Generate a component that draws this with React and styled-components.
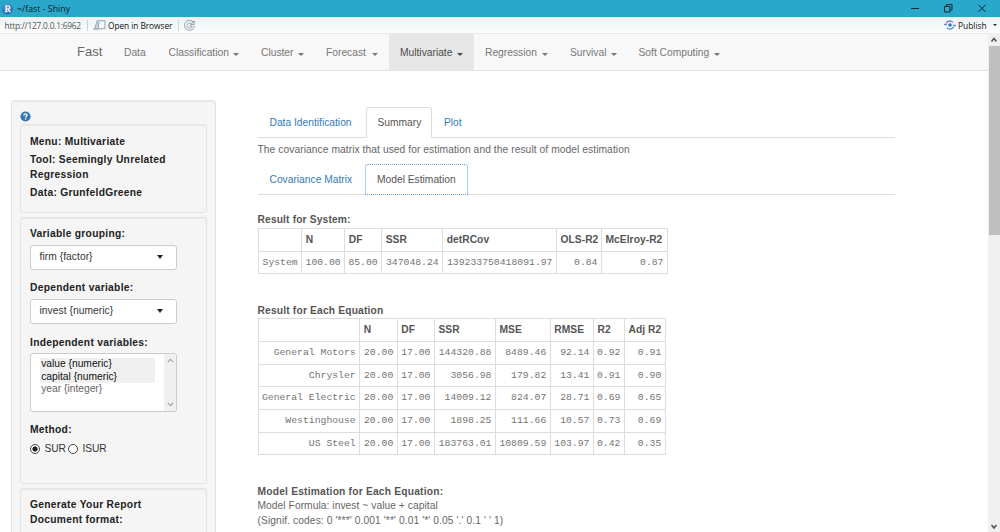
import React from 'react';
import styled, { createGlobalStyle } from 'styled-components';

const Global = createGlobalStyle`
  * { box-sizing: border-box; }
  body {
    margin: 0;
    background: #fff;
    overflow: hidden;
    font: 10.25px/14.6px "Liberation Sans", Arial, sans-serif;
    color: #666;
  }
`;

const Window = styled.div`
  width: 1000px;
  height: 532px;
  display: flex;
  flex-direction: column;
  overflow: hidden;
`;

const TitleBar = styled.header`
  height: 17px;
  flex: none;
  display: flex;
  align-items: center;
  padding: 0 14px 1px 2px;
  background: #2aa8cc;
  color: #0c1c22;
  font: 8.8px/16px "Open Sans", "Noto Sans", sans-serif;
`;

const AppTitle = styled.span`
  flex: 1;
  margin-left: 4px;
  padding-top: 1px;
`;

const WindowButtons = styled.div`
  display: flex;
  align-items: center;
  gap: 25px;
  svg { display: block; }
`;

const ViewerBar = styled.div`
  height: 16px;
  flex: none;
  display: flex;
  align-items: center;
  padding: 0 3px 0 4.5px;
  background: linear-gradient(#eef2f4, #fcfdfd);
  font: 8.4px/15px "Open Sans", "Noto Sans", sans-serif;
  color: #111;
  svg { display: block; flex: none; }
`;

const Address = styled.span`
  width: 82px;
  color: #555;
  letter-spacing: -0.23px;
  white-space: nowrap;
`;

const Rule = styled.i`
  width: 1px;
  height: 11px;
  background: #cfd3d6;
  margin-right: ${(p) => p.$gap}px;
`;

const OpenLabel = styled.span`
  width: 70px;
  margin-left: 2.5px;
  white-space: nowrap;
  font-weight: 500;
  letter-spacing: -0.08px;
`;

const PublishLabel = styled.span`
  width: 35px;
  margin: 0 0 0 2px;
  font-weight: 500;
`;

const Spacer = styled.span`
  flex: 1;
`;

const Viewport = styled.div`
  flex: 1;
  min-height: 0;
  display: flex;
`;

const Page = styled.div`
  flex: 1;
  min-width: 0;
  overflow: hidden;
`;

const Scrollbar = styled.div`
  width: 12px;
  display: flex;
  flex-direction: column;
  align-items: center;
  background: #f0f0f0;
  svg { display: block; flex: none; }
`;

const Thumb = styled.div`
  width: 11px;
  height: 189px;
  margin-bottom: auto;
  background: #bfbfbf;
`;

const Navbar = styled.nav`
  height: 38px;
  display: flex;
  background: #f8f8f8;
  border-top: 1px solid #e7e7e7;
  border-bottom: 1px solid #e3e3e3;
  padding-left: 77px;
`;

const Brand = styled.span`
  width: 36px;
  font-size: 13px;
  line-height: 36px;
  color: #686868;
`;

const NavItem = styled.a`
  width: ${(p) => p.$w}px;
  display: flex;
  justify-content: space-between;
  align-items: center;
  padding: 2px 11px 0;
  white-space: nowrap;
  background: ${(p) => (p.$active ? '#e7e7e7' : 'transparent')};
  color: ${(p) => (p.$active ? '#4c4c4c' : '#777')};
`;

const Caret = styled.i`
  border: solid transparent;
  border-width: 3px 3px 0;
  border-top-color: currentColor;
  margin-top: 2px;
`;

const Columns = styled.div`
  display: flex;
  align-items: flex-start;
  padding: 29px 0 0 11px;
`;

const Sidebar = styled.aside`
  width: 205px;
  height: 480px;
  padding: 10px 8.5px 10px 8px;
  background: #f5f5f5;
  border: 1px solid #e3e3e3;
  border-radius: 3px;
  box-shadow: inset 0 1px 1px rgba(0, 0, 0, 0.05);
  color: #222;
`;

const HelpIcon = styled.svg`
  display: block;
  margin: 0 0 2.3px 0;
`;

const Well = styled.section`
  height: ${(p) => p.$h}px;
  margin-bottom: 3.5px;
  padding: 9.5px 9px 0;
  border: 1px solid #e3e3e3;
  border-radius: 3px;
  box-shadow: inset 0 1px 1px rgba(0, 0, 0, 0.05);
`;

const Label = styled.div`
  margin-bottom: ${(p) => (p.$mb === undefined ? 3.7 : p.$mb)}px;
  font-weight: 700;
  letter-spacing: 0.29px;
`;

const Select = styled.div`
  width: 147px;
  height: 25px;
  margin-bottom: 11.8px;
  display: flex;
  align-items: center;
  justify-content: space-between;
  padding: 0 13px 0 8.5px;
  background: #fff;
  border: 1px solid #ccc;
  border-radius: 3px;
  color: #333;
  letter-spacing: 0.05px;
`;

const SelectCaret = styled.i`
  border: solid transparent;
  border-width: ${(p) => (p.$small ? '2.5px 2px 0' : '4px 3.5px 0')};
  border-top-color: #222;
`;

const ListBox = styled.div`
  width: 147px;
  height: 59px;
  margin-bottom: 11px;
  display: flex;
  justify-content: space-between;
  background: #fff;
  border: 1px solid #ccc;
  border-radius: 3px;
  overflow: hidden;
`;

const Options = styled.div`
  width: 115px;
  margin: 4px 0 0 9px;
`;

const Option = styled.div`
  padding-left: 1.2px;
  line-height: 12.6px;
  background: ${(p) => (p.$on ? '#f0f0f0' : 'transparent')};
  color: ${(p) => (p.$on ? '#111' : '#666')};
`;

const ListScroll = styled.div`
  width: 12px;
  display: flex;
  flex-direction: column;
  justify-content: space-between;
  align-items: center;
  padding: 4px 0;
  background: #f0f0f0;
`;

const Radios = styled.div`
  display: flex;
  align-items: center;
  padding-top: 0.5px;
  color: #333;
`;

const Radio = styled.i`
  width: 10px;
  height: 10px;
  margin-right: 4.5px;
  border: 1px solid #444;
  border-radius: 50%;
  background: ${(p) => (p.$on ? 'radial-gradient(circle, #222 0 2.2px, #fff 3px)' : '#fff')};
`;

const RadioText = styled.span`
  width: ${(p) => p.$w}px;
  letter-spacing: -0.15px;
`;

const Main = styled.main`
  width: 637px;
  margin-left: 41.5px;
  padding-top: 7px;
`;

const Tabs = styled.div`
  height: 31px;
  display: flex;
  border-bottom: 1px solid #ddd;
`;

const Tab = styled.a`
  width: ${(p) => p.$w}px;
  height: 31px;
  padding-left: 11px;
  line-height: 30px;
  white-space: nowrap;
  color: ${(p) => (p.$active ? '#555' : '#337ab7')};
  border: 1px solid transparent;
  ${(p) => p.$active && 'background: #fff; border-color: #ddd #ddd #fff; border-radius: 3px 3px 0 0;'}
  ${(p) => p.$focused && 'border: 1px dotted #5b9fdc;'}
`;

const Paragraph = styled.p`
  margin: ${(p) => p.$m};
  letter-spacing: ${(p) => p.$ls || 0}px;
  white-space: nowrap;
`;

const Heading = styled.h4`
  margin: ${(p) => p.$m};
  font-size: 10.25px;
  font-weight: 700;
  letter-spacing: ${(p) => p.$ls}px;
  color: #555;
`;

const Table = styled.table`
  width: ${(p) => p.$w}px;
  table-layout: fixed;
  border-collapse: collapse;
`;

const Th = styled.th`
  height: 22.7px;
  padding: 0 0 0 3.5px;
  border: 1px solid #ddd;
  text-align: left;
  white-space: nowrap;
  letter-spacing: 0.05px;
  color: #555;
`;

const Td = styled.td`
  height: 22.7px;
  padding: 0 3.5px 0 0;
  border: 1px solid #ddd;
  text-align: right;
  white-space: nowrap;
  font: 9.78px/14px "Liberation Mono", "Courier New", monospace;
  color: #747474;
`;

const NAV = [
  ['Data', 44.5], ['Classification', 92.5], ['Cluster', 65], ['Forecast', 74],
  ['Multivariate', 85], ['Regression', 85], ['Survival', 68.5], ['Soft Computing', 103],
];

const SYSTEM = {
  cols: [43.7, 43, 37, 61, 113.8, 45, 66],
  head: ['', 'N', 'DF', 'SSR', 'detRCov', 'OLS-R2', 'McElroy-R2'],
  rows: [['System', '100.00', '85.00', '347048.24', '139233750418091.97', '0.84', '0.87']],
};

const EQUATIONS = {
  cols: [101.7, 37.6, 37.2, 61, 54.8, 43.2, 31, 40.8],
  head: ['', 'N', 'DF', 'SSR', 'MSE', 'RMSE', 'R2', 'Adj R2'],
  rows: [
    ['General Motors', '20.00', '17.00', '144320.88', '8489.46', '92.14', '0.92', '0.91'],
    ['Chrysler', '20.00', '17.00', '3056.98', '179.82', '13.41', '0.91', '0.90'],
    ['General Electric', '20.00', '17.00', '14009.12', '824.07', '28.71', '0.69', '0.65'],
    ['Westinghouse', '20.00', '17.00', '1898.25', '111.66', '10.57', '0.73', '0.69'],
    ['US Steel', '20.00', '17.00', '183763.01', '10809.59', '103.97', '0.42', '0.35'],
  ],
};

function Grid({ data }) {
  return (
    <Table $w={data.cols.reduce((a, b) => a + b, 0)}>
      <colgroup>{data.cols.map((w, i) => <col key={i} style={{ width: w }} />)}</colgroup>
      <thead><tr>{data.head.map((h, i) => <Th key={i}>{h}</Th>)}</tr></thead>
      <tbody>
        {data.rows.map((r) => (
          <tr key={r[0]}>{r.map((c, i) => <Td key={i}>{c}</Td>)}</tr>
        ))}
      </tbody>
    </Table>
  );
}

function Chevron({ down }) {
  return (
    <svg width="7" height="5" viewBox="0 0 7 5" fill="none" stroke="#a0a0a0" strokeWidth="1.1">
      <path d={down ? 'M.8 .8 3.5 3.6 6.2 .8' : 'M.8 4.2 3.5 1.4 6.2 4.2'} />
    </svg>
  );
}

export default function App() {
  return (
    <Window>
      <Global />
      <TitleBar>
        <svg width="11" height="13" viewBox="0 0 11 13">
          <circle cx="5.5" cy="7" r="5.4" fill="#2b6cb8" />
          <circle cx="5.5" cy="5.8" r="4.2" fill="#6fa5dc" opacity=".6" />
          <path d="M3 4h3.2a1.5 1.5 0 0 1 0 3H4.4M4.2 4v5.6M3 9.6h2.4M6 7.1l1.6 2.5h1" fill="none" stroke="#fff" strokeWidth="1.2" />
        </svg>
        <AppTitle>~/fast - Shiny</AppTitle>
        <WindowButtons>
          <svg width="8" height="9"><path d="M0 4.5h8" stroke="#10262e" /></svg>
          <svg width="9" height="9" fill="none" stroke="#10262e"><path d="M.5 2.5h5.5v5.5H.5zM2.5 2.5V.5h5.5V6H6" /></svg>
          <svg width="8" height="9" fill="none" stroke="#10262e"><path d="M.5 .8 7.5 8M7.5 .8.5 8" /></svg>
        </WindowButtons>
      </TitleBar>
      <ViewerBar>
        <Address>http://127.0.0.1:6962</Address>
        <Rule $gap={5} />
        <svg width="13" height="10" viewBox="0 0 13 10" fill="#f4f7f9" stroke="#8695a5" strokeWidth=".9">
          <path d="M4 .8h8v8H4z" />
          <path d="M.6 9.2C2.4 8.4 2.6 5.2 3.4 3.4 4 2.2 5.6 2 6.4 3.2 5 4.6 5.6 7.6 4.6 9.2z" fill="#c8d8e6" />
        </svg>
        <OpenLabel>Open in Browser</OpenLabel>
        <Rule $gap={5} />
        <svg width="11" height="11" viewBox="0 0 11 11" fill="none" stroke="#8b98a6" strokeWidth=".9">
          <path d="M9.3 2.2A5 5 0 1 0 10.4 6M10.2.8v3.8H6.6z" />
          <path d="M7.3 3.7a2.6 2.6 0 1 0 .8 2.4H5.5" />
        </svg>
        <Spacer />
        <svg width="12" height="10" viewBox="0 0 12 10" fill="none" stroke="#5b92cf" strokeWidth="1.4">
          <path d="M2.3 3.3A4 4 0 0 1 9 2.4M9.7 6.7A4 4 0 0 1 3 7.6M0 4.5h3M9 5.5h3" />
          <circle cx="6" cy="5" r="1.8" fill="#2f75c4" stroke="none" />
        </svg>
        <PublishLabel>Publish</PublishLabel>
        <SelectCaret $small />
      </ViewerBar>
      <Viewport>
        <Page>
          <Navbar>
            <Brand>Fast</Brand>
            {NAV.map(([name, w]) => (
              <NavItem key={name} $w={w} $active={name === 'Multivariate'}>
                {name}
                {name !== 'Data' && <Caret />}
              </NavItem>
            ))}
          </Navbar>
          <Columns>
            <Sidebar>
              <HelpIcon width="11" height="11" viewBox="0 0 11 11">
                <circle cx="5.5" cy="5.5" r="5.1" fill="#2f77b8" />
                <path d="M3.9 4.4C3.9 2.4 7.1 2.5 7.1 4.2 7.1 5.3 5.6 5.2 5.6 6.6M5.6 7.2v1.4" fill="none" stroke="#fff" strokeWidth="1.4" />
              </HelpIcon>
              <Well $h={89}>
                <Label>Menu: Multivariate</Label>
                <Label>Tool: Seemingly Unrelated<br />Regression</Label>
                <Label>Data: GrunfeldGreene</Label>
              </Well>
              <Well $h={267.5}>
                <Label $mb={2.8}>Variable grouping:</Label>
                <Select>firm {'{factor}'}<SelectCaret /></Select>
                <Label $mb={2.8}>Dependent variable:</Label>
                <Select>invest {'{numeric}'}<SelectCaret /></Select>
                <Label $mb={2.8}>Independent variables:</Label>
                <ListBox>
                  <Options>
                    <Option $on>value {'{numeric}'}</Option>
                    <Option $on>capital {'{numeric}'}</Option>
                    <Option>year {'{integer}'}</Option>
                  </Options>
                  <ListScroll>
                    <Chevron />
                    <Chevron down />
                  </ListScroll>
                </ListBox>
                <Label>Method:</Label>
                <Radios>
                  <Radio $on /><RadioText $w={23.5}>SUR</RadioText>
                  <Radio /><RadioText $w={26}>ISUR</RadioText>
                </Radios>
              </Well>
              <Well $h={120}>
                <Label $mb={0}>Generate Your Report</Label>
                <Label>Document format:</Label>
              </Well>
            </Sidebar>
            <Main>
              <Tabs>
                <Tab $w={108}>Data Identification</Tab>
                <Tab $w={66.4} $active>Summary</Tab>
                <Tab $w={50}>Plot</Tab>
              </Tabs>
              <Paragraph $m="4.6px 0 6.8px" $ls={0.065}>The covariance matrix that used for estimation and the result of model estimation</Paragraph>
              <Tabs>
                <Tab $w={107.5}>Covariance Matrix</Tab>
                <Tab $w={102.5} $active $focused>Model Estimation</Tab>
              </Tabs>
              <Heading $m="18.4px 0 0" $ls={0.14}>Result for System:</Heading>
              <Grid data={SYSTEM} />
              <Heading $m="29.4px 0 0" $ls={0.17}>Result for Each Equation</Heading>
              <Grid data={EQUATIONS} />
              <Heading $m="29.4px 0 0" $ls={0.2}>Model Estimation for Each Equation:</Heading>
              <Paragraph $m="0" $ls={0.05}>Model Formula: invest ~ value + capital</Paragraph>
              <Paragraph $m="0" $ls={0.09}>(Signif. codes: 0 '***' 0.001 '**' 0.01 '*' 0.05 '.' 0.1 ' ' 1)</Paragraph>
            </Main>
          </Columns>
        </Page>
        <Scrollbar>
          <svg width="12" height="13" fill="none" stroke="#505050" strokeWidth="1.5"><path d="M3.5 8.5 6 5.5 8.5 8.5" /></svg>
          <Thumb />
          <svg width="12" height="12" fill="none" stroke="#505050" strokeWidth="1.5"><path d="M3.5 5 6 8 8.5 5" /></svg>
        </Scrollbar>
      </Viewport>
    </Window>
  );
}
